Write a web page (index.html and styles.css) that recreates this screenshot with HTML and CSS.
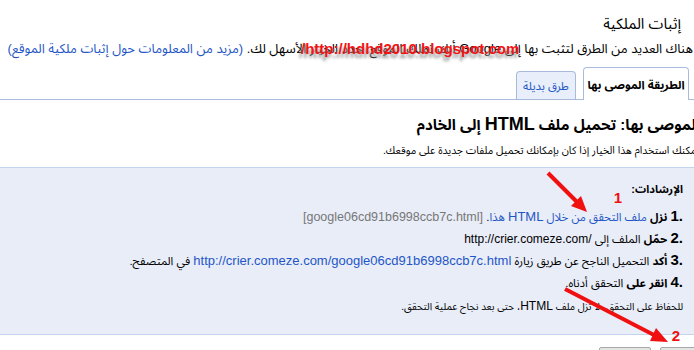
FILE: index.html
```html
<!DOCTYPE html>
<html lang="ar">
<head>
    <meta charset="UTF-8">
    <meta name="viewport" content="width=device-width, initial-scale=1.0">
    <title>إثبات الملكية</title>
    <link rel="stylesheet" href="styles.css">
</head>
<body>
<div class="page">
    <h1 class="title">إثبات الملكية</h1>
    <p class="intro">هناك العديد من الطرق لتثبت بها إلى Google أنك تملك الموقع. حدد الخيار الأسهل لك. <a href="#">(مزيد من المعلومات حول إثبات ملكية الموقع)</a></p>

    <div class="tabs">
        <div class="tab active">الطريقة الموصى بها</div>
        <div class="tab"><a href="#">طرق بديلة</a></div>
    </div>

    <h2 class="method">الموصى بها: تحميل ملف <span class="en">HTML</span> إلى الخادم</h2>
    <p class="sub">يمكنك استخدام هذا الخيار إذا كان بإمكانك تحميل ملفات جديدة على موقعك.</p>

    <div class="steps">
        <div class="steps-title">الإرشادات:</div>
        <ol>
            <li><b class="num">1.</b> <b>نزل</b> <a href="#">ملف التحقق من خلال <span class="en">HTML</span> هذا</a>. <span class="file">[google06cd91b6998ccb7c.html]</span></li>
            <li><b class="num">2.</b> <b>حمّل</b> الملف إلى <span class="url">http://crier.comeze.com/</span></li>
            <li><b class="num">3.</b> <b>أكد</b> التحميل الناجح عن طريق زيارة <a class="url long" href="#">http://crier.comeze.com/google06cd91b6998ccb7c.html</a> في المتصفح.</li>
            <li><b class="num">4.</b> <b>انقر على</b> التحقق أدناه.</li>
        </ol>
        <p class="note">للحفاظ على التحقق، لا تزل ملف <span class="en">HTML</span>، حتى بعد نجاح عملية التحقق.</p>
    </div>

    <div class="buttons">
        <button class="btn-main">تحقق</button>
        <button class="btn-later">ليس الآن</button>
    </div>
</div>

<div class="mark">http://hdhd2010.blogspot.com/</div>

<svg class="arrows" width="694" height="350" viewBox="0 0 694 350">
    <line x1="548" y1="173" x2="578" y2="203" stroke="#f01010" stroke-width="4"/>
    <polygon points="587,212 571,206 581,196" fill="#f01010"/>
    <text x="618" y="203" class="label">1</text>
    <line x1="565" y1="289" x2="654" y2="335" stroke="#f01010" stroke-width="4"/>
    <polygon points="668,342 650,341 656,328" fill="#f01010"/>
    <text x="676" y="341" class="label">2</text>
</svg>
</body>
</html>
```

FILE: styles.css
```css
html, body {
    margin: 0;
    overflow: hidden;
}
body {
    direction: rtl;
    font-family: "Liberation Sans", "Noto Sans Arabic", "Noto Naskh Arabic", "DejaVu Sans", sans-serif;
    font-size: 13px;
    color: #000;
    background: #fff;
}
a {
    color: #1f56c6;
    text-decoration: none;
}
.page {
    margin-right: -6px;
}
.title {
    height: 28px;
    margin: 0;
    padding: 10px 19px 0 0;
    font-size: 15px;
    font-weight: normal;
    line-height: 28px;
}
.intro {
    height: 16px;
    margin: 3px 0 0;
    padding-right: 7px;
    line-height: 16px;
    white-space: nowrap;
}
.tabs {
    display: flex;
    align-items: flex-end;
    gap: 7px;
    height: 32px;
    margin-top: 10px;
    padding-right: 11px;
    border-bottom: 1px solid #a9bbdd;
}
.tab {
    display: flex;
    align-items: center;
    justify-content: center;
    box-sizing: border-box;
    width: 60px;
    height: 28px;
    padding-top: 1px;
    border: 1px solid #a9bbdd;
    border-bottom: none;
    border-radius: 4px 4px 0 0;
    background: #e8eefa;
    font-size: 11.5px;
    white-space: nowrap;
}
.tab.active {
    width: 106px;
    height: 33px;
    margin-bottom: -1px;
    padding-top: 2px;
    background: #fff;
    font-weight: bold;
}
.method {
    height: 24px;
    margin: 12px 0 0;
    font-size: 15px;
    line-height: 24px;
    white-space: nowrap;
}
.method .en {
    font-size: 18px;
}
.sub {
    height: 16px;
    margin: 6px 0 0;
    font-size: 10.5px;
    line-height: 16px;
    white-space: nowrap;
}
.steps {
    margin-top: 9px;
    padding: 11px 17px 17px 0;
    background: #e8edf8;
    border-top: 1px solid #c5d3ec;
    border-bottom: 1px solid #c5d3ec;
}
.steps-title {
    height: 20px;
    font-size: 11px;
    font-weight: bold;
    line-height: 20px;
}
.steps ol {
    margin: 6px 0 0;
    padding: 0;
    list-style: none;
}
.steps li {
    height: 22px;
    font-size: 11.5px;
    line-height: 22px;
    white-space: nowrap;
}
.steps li .en {
    font-size: 13px;
}
.num {
    font-size: 15px;
    direction: ltr;
    unicode-bidi: isolate;
}
.url {
    font-size: 12px;
    direction: ltr;
    unicode-bidi: isolate;
}
.url.long {
    font-size: 13px;
}
.file {
    font-size: 12.5px;
    color: #777;
    direction: ltr;
    unicode-bidi: isolate;
}
.note {
    height: 22px;
    margin: 2px 0 0;
    font-size: 10px;
    line-height: 22px;
    white-space: nowrap;
}
.note .en {
    font-size: 12px;
}
.buttons {
    display: flex;
    gap: 9px;
    margin-top: 12px;
}
.buttons button {
    box-sizing: border-box;
    height: 22px;
    padding: 0;
    border: 1px solid #a8a8a8;
    border-radius: 2px;
    background: #e4e4e4;
    font: inherit;
    font-size: 11px;
}
.btn-main {
    width: 40px;
}
.btn-later {
    width: 52px;
}
.mark {
    position: absolute;
    left: 301px;
    top: 40px;
    font-family: "Liberation Sans", sans-serif;
    font-size: 15px;
    font-weight: bold;
    color: #f41414;
    text-shadow: -2px 4px 3px #9a9a9a;
}
.arrows {
    position: absolute;
    left: 0;
    top: 0;
    pointer-events: none;
}
.label {
    font-family: "Liberation Sans", sans-serif;
    font-size: 15px;
    font-weight: bold;
    fill: #f01010;
    text-anchor: middle;
}
```
